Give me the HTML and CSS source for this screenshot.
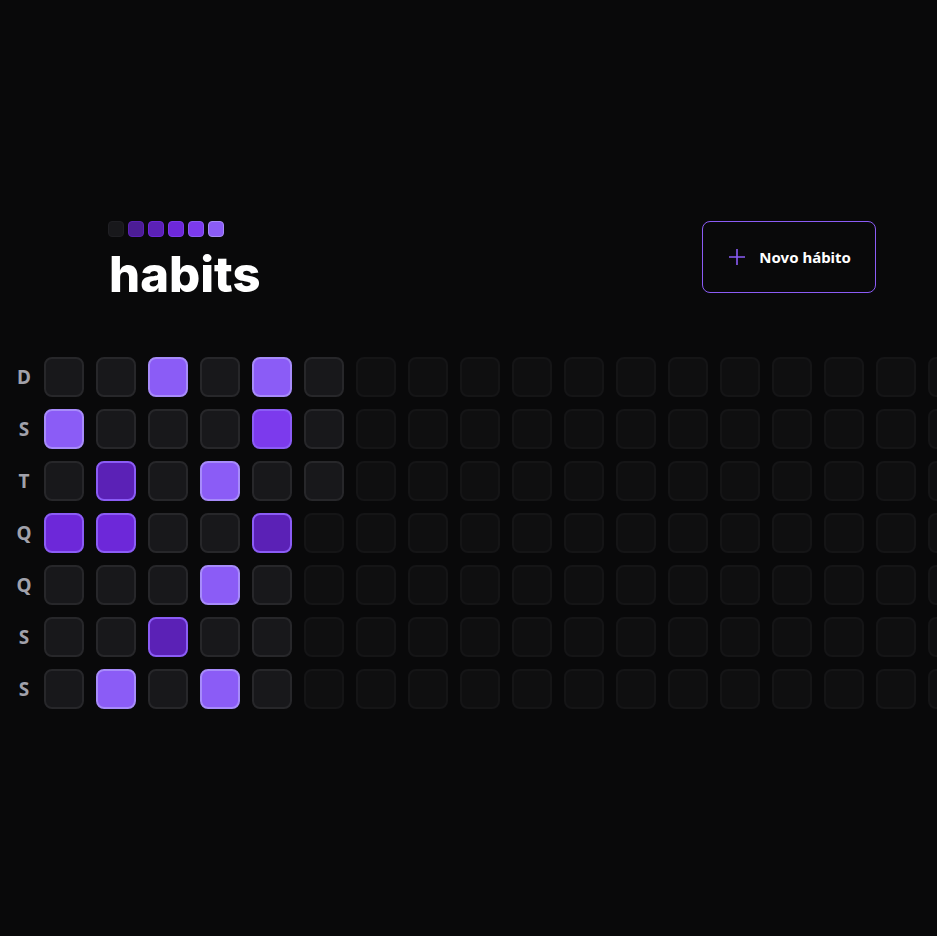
FILE: index.html
```html
<!DOCTYPE html>
<html lang="pt-BR">
<head>
<meta charset="utf-8">
<title>habits</title>
<link rel="stylesheet" href="styles.css">
</head>
<body>
<div class="screen">
  <div class="container">
    <header class="header">
      <div class="brand">
        <div class="legend">
          <span class="sq l0"></span><span class="sq l1"></span><span class="sq l2"></span><span class="sq l3"></span><span class="sq l4"></span><span class="sq l5"></span>
        </div>
        <div class="wordmark">habits</div>
      </div>
      <button class="new-habit" type="button">
        <svg class="plus" width="20" height="20" viewBox="0 0 20 20" fill="none" stroke="#8b5cf6" stroke-width="1.6"><path d="M2 10h16M10 2v16"/></svg>
        <span>Novo hábito</span>
      </button>
    </header>
    <div class="summary">
      <div class="weekdays">
        <div class="wd">D</div><div class="wd">S</div><div class="wd">T</div><div class="wd">Q</div><div class="wd">Q</div><div class="wd">S</div><div class="wd">S</div>
      </div>
      <div class="days" id="days"></div>
    </div>
  </div>
</div>
<script>
  // levels for past days (column-major: each column is a week, Sunday first)
  var past = [
    0,5,0,4,0,0,0,
    0,0,3,4,0,0,5,
    5,0,0,0,0,3,0,
    0,0,5,0,5,0,5,
    5,6,0,3,0,0,0,
    0,0,0
  ];
  var total = 18 * 7;
  var html = '';
  for (var i = 0; i < total; i++) {
    if (i < past.length) {
      html += '<div class="day lv' + past[i] + '"></div>';
    } else {
      html += '<div class="day future"></div>';
    }
  }
  document.getElementById('days').innerHTML = html;
</script>
</body>
</html>
```

FILE: styles.css
```css
html, body {
  margin: 0;
  padding: 0;
  background: #09090a;
  color: #ffffff;
  font-family: Inter, "Noto Sans", sans-serif;
  overflow: hidden;
}

.screen {
  width: 937px;
  height: 936px;
  display: flex;
  align-items: center;
  overflow: hidden;
}

.container {
  flex: none;
  width: 976px;
  margin-left: 4px;
  margin-top: -6px;
  display: flex;
  flex-direction: column;
  gap: 64px;
}

.header {
  width: 768px;
  height: 72px;
  margin: 0 auto;
  display: flex;
  align-items: flex-start;
  justify-content: space-between;
}

.brand {
  display: flex;
  flex-direction: column;
}

.legend {
  display: flex;
  gap: 4px;
}

.sq {
  width: 14px;
  height: 14px;
  border-radius: 4px;
  border: 1px solid;
}

.l0 { background: #18181b; border-color: #1f1f23; }
.l1 { background: #4c1d95; border-color: #5b21b6; }
.l2 { background: #5b21b6; border-color: #6d28d9; }
.l3 { background: #6d28d9; border-color: #7c3aed; }
.l4 { background: #7c3aed; border-color: #8b5cf6; }
.l5 { background: #8b5cf6; border-color: #a78bfa; }

.wordmark {
  font-family: Inter, sans-serif;
  font-weight: 800;
  font-size: 49px;
  line-height: 60px;
  margin-top: 8px;
  margin-left: 1px;
}

.new-habit {
  display: flex;
  align-items: center;
  gap: 12px;
  height: 72px;
  padding: 0 24px;
  background: transparent;
  border: 1px solid #8b5cf6;
  border-radius: 8px;
  color: #ffffff;
  font-family: "Noto Sans", sans-serif;
  font-weight: 700;
  font-size: 15px;
  line-height: 24px;
  cursor: pointer;
}

.plus {
  display: block;
}

.summary {
  display: flex;
}

.weekdays {
  display: grid;
  grid-template-rows: repeat(7, 40px);
  gap: 12px;
}

.wd {
  width: 40px;
  height: 40px;
  display: flex;
  align-items: center;
  justify-content: center;
  color: #a1a1aa;
  font-family: "Noto Sans", sans-serif;
  font-weight: 700;
  font-size: 19px;
}

.days {
  display: grid;
  grid-template-rows: repeat(7, 40px);
  grid-auto-flow: column;
  grid-auto-columns: 40px;
  gap: 12px;
}

.day {
  width: 40px;
  height: 40px;
  box-sizing: border-box;
  border: 2px solid;
  border-radius: 8px;
}

.lv0 { background: #18181b; border-color: #27272a; }
.lv3 { background: #5b21b6; border-color: #8b5cf6; }
.lv4 { background: #6d28d9; border-color: #8b5cf6; }
.lv5 { background: #8b5cf6; border-color: #a78bfa; }
.lv6 { background: #7c3aed; border-color: #8b5cf6; }

.future {
  background: #18181b;
  border-color: #27272a;
  opacity: 0.4;
}
```
